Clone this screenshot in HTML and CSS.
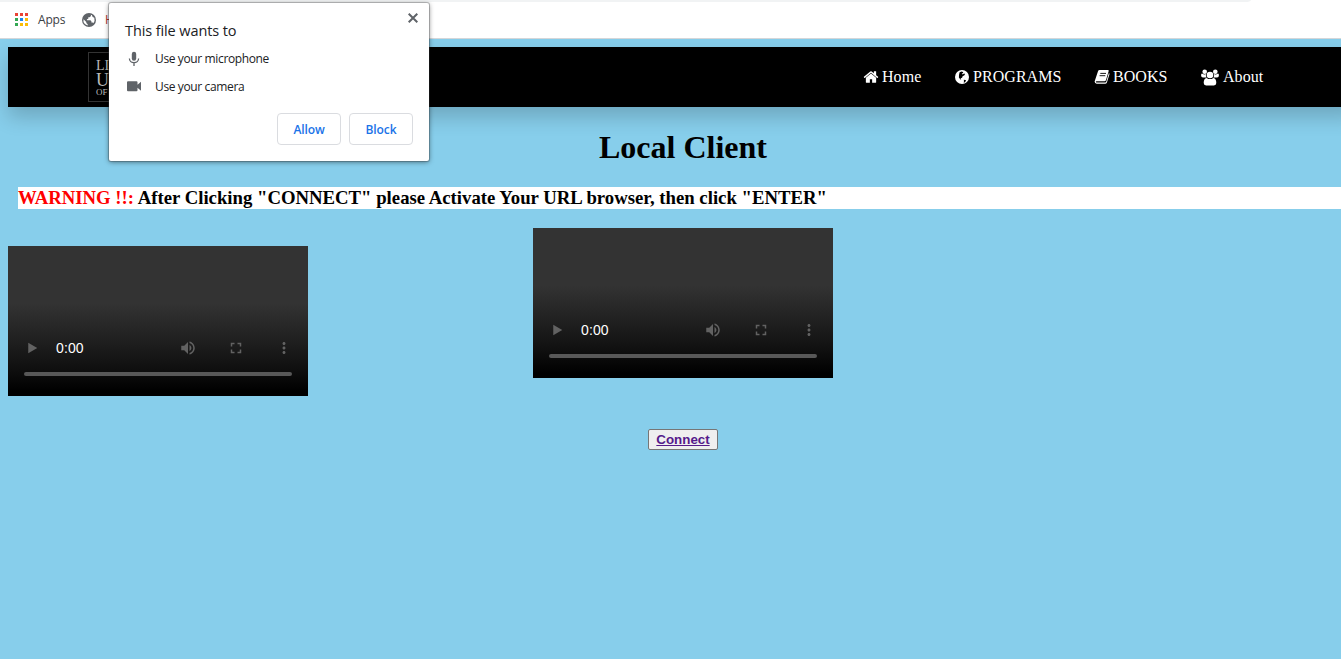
FILE: index.html
```html
<!DOCTYPE html>
<html lang="en">
<head>
<meta charset="utf-8">
<title>Local Client</title>
<link rel="stylesheet" href="styles.css">
</head>
<body>
<svg class="defs" width="0" height="0">
  <symbol id="globe" viewBox="0 0 14 14">
    <circle cx="7" cy="7" r="7" fill="currentColor"/>
    <path class="land" d="M4.600 2.200 6.500 1.400 8 2l.2 1-1.500.4.9 1 1.500-.8.900.3-.6 1.400-1.800 1-.5 1.400-1.500.5.6 1.500-1-.5-1.300-1.700L4 5z"/>
    <path class="land" d="M8.800 9.800l1.600.1.700.8-1.500 1.700-1 .1.400-1.200z"/>
  </symbol>
  <symbol id="play" viewBox="0 0 24 24"><path d="M7 5v14l12-7z"/></symbol>
  <symbol id="volume" viewBox="0 0 24 24"><path d="M3 9v6h4l5 5V4L7 9H3zm13.500 3c0-1.770-1.020-3.290-2.500-4.030v8.050c1.480-.73 2.500-2.250 2.500-4.020zM14 3.230v2.060c2.890.86 5 3.540 5 6.710s-2.110 5.850-5 6.710v2.060c4.010-.91 7-4.490 7-8.770s-2.990-7.860-7-8.770z"/></symbol>
  <symbol id="full" viewBox="0 0 24 24"><path d="M7 14H5v5h5v-2H7v-3zm-2-4h2V7h3V5H5v5zm12 7h-3v2h5v-5h-2v3zM14 5v2h3v3h2V5h-5z"/></symbol>
  <symbol id="more" viewBox="0 0 24 24"><path d="M12 8c1.100 0 2-.9 2-2s-.9-2-2-2-2 .9-2 2 .9 2 2 2zm0 2c-1.100 0-2 .9-2 2s.9 2 2 2 2-.9 2-2-.9-2-2-2zm0 6c-1.100 0-2 .9-2 2s.9 2 2 2 2-.9 2-2-.9-2-2-2z"/></symbol>
</svg>

<div class="browser-bar">
  <div class="address-edge"></div>
  <div class="bookmarks">
    <svg class="apps-icon" width="13" height="13" viewBox="0 0 13 13" shape-rendering="crispEdges">
      <path fill="#ea4335" d="M0 0h3v3H0zM5 0h3v3H5zM10 0h3v3h-3z"/>
      <path fill="#34a853" d="M0 5h3v3H0zM0 10h3v3H0z"/>
      <path fill="#1a86f0" d="M5 5h3v3H5z"/>
      <path fill="#fbbc05" d="M10 5h3v3h-3zM5 10h3v3H5zM10 10h3v3h-3z"/>
    </svg>
    <span class="apps-label">Apps</span>
    <svg class="site-icon" width="14" height="14" viewBox="0 0 14 14">
      <circle cx="7" cy="7" r="7" fill="#5f6368"/>
      <path fill="#fff" d="M7.200 1.400 8.800 1.700 9 3 7.600 4.200H6.300v1.500l-1.400.5v1h3.500l1 1v1.300h1.300l.6.7a5.600 5.600 0 0 0 1-5.400L10.700 4.100 9.800 2.100zM1.500 6.300 4.300 9v1.100l1.400 1.200v1.200A5.600 5.600 0 0 1 1.500 6.300z"/>
    </svg>
    <span class="site-label">H</span>
  </div>
</div>

<main class="page">
  <header class="header">
    <div class="logo"><span class="l1">LI</span><span class="l2">U</span><span class="l3">OF C</span></div>
    <nav class="nav">
      <a class="home"><svg width="16" height="16" viewBox="0 0 1792 1792"><path fill="currentColor" d="M1472 992v480q0 26-19 45t-45 19h-384v-384h-256v384h-384q-26 0-45-19t-19-45v-480q0-1 .5-3t.5-3l575-474 575 474q1 2 1 6zm223-69l-62 74q-8 9-21 11h-3q-13 0-21-7l-692-577-692 577q-12 8-24 7-13-2-21-11l-62-74q-8-10-7-23.500t11-21.500l719-599q32-26 76-26t76 26l244 204v-195q0-14 9-23t23-9h192q14 0 23 9t9 23v408l219 182q10 8 11 21.500t-7 23.500z"/></svg><span>Home</span></a>
      <a class="programs"><svg width="14" height="14"><use href="#globe"/></svg><span>PROGRAMS</span></a>
      <a class="books"><svg width="16" height="16" viewBox="0 0 16 16"><path fill="currentColor" d="M5.500 1h8.400q1.100 0 .8 1.100l-2.700 9q-.4 1.200-1.600 1.200H2.600q-1 0-.7.7.2.500 1 .500h8.300q.7 0 1-.7L14.900 4q.8.400.5 1.500l-2.500 8q-.4 1.300-1.800 1.300H2.700Q.7 14.500.6 12.500L4 2.200Q4.400 1 5.500 1z"/><path fill="none" stroke="#000" stroke-width=".9" d="M6.300 4.400h5.700M5.600 6.700h5.700"/></svg><span>BOOKS</span></a>
      <a class="about"><svg width="18" height="17" viewBox="0 0 18 17"><g fill="currentColor"><circle cx="3.700" cy="2.700" r="2.300"/><circle cx="14.300" cy="2.700" r="2.300"/><path d="M.1 6.500Q0 4.500 1 4.500q2.500 1.500 4 .5-.5 2 .6 3.500H2Q.1 8.500.1 6.500zM17.900 6.500q.1-2-.9-2-2.500 1.500-4 .5.500 2-.6 3.500H16q1.900 0 1.900-2z"/><circle cx="9" cy="6" r="3.300"/><path d="M5.600 8.900Q2.700 9.200 2.700 14q0 2.400 2.400 2.400h7.800q2.400 0 2.400-2.400 0-4.800-2.900-5.100Q9 11.300 5.600 8.900z"/></g></svg><span>About</span></a>
    </nav>
  </header>

  <h1 class="title">Local Client</h1>
  <p class="warning"><span class="alert">WARNING !!:</span> After Clicking "CONNECT" please Activate Your URL browser, then click "ENTER"</p>

  <div class="videos">
    <div class="video first">
      <div class="controls">
        <svg class="play"><use href="#play"/></svg><span class="time">0:00</span>
        <svg><use href="#volume"/></svg><svg><use href="#full"/></svg><svg><use href="#more"/></svg>
      </div>
      <div class="track"></div>
    </div>
    <div class="video">
      <div class="controls">
        <svg class="play"><use href="#play"/></svg><span class="time">0:00</span>
        <svg><use href="#volume"/></svg><svg><use href="#full"/></svg><svg><use href="#more"/></svg>
      </div>
      <div class="track"></div>
    </div>
  </div>
  <div class="connect-row"><button class="connect">Connect</button></div>
</main>

<div class="popup">
  <svg class="close" width="10" height="10" viewBox="0 0 10 10"><path d="M.7.7l8.600 8.600M9.300.7.7 9.300" stroke="#5f6368" stroke-width="2"/></svg>
  <div class="popup-title">This file wants to</div>
  <div class="perm">
    <svg width="16" height="16" viewBox="0 0 16 16"><path fill="#5f6368" d="M8 .8a2.200 2.200 0 0 1 2.200 2.200v4.500a2.200 2.200 0 0 1-4.400 0V3A2.200 2.200 0 0 1 8 .8z"/><path fill="none" stroke="#5f6368" stroke-width="1.300" d="M3.400 7.500a4.600 4.200 0 0 0 9.200 0M8 11.500V15"/></svg>
    <span>Use your microphone</span>
  </div>
  <div class="perm">
    <svg width="16" height="16" viewBox="0 0 16 16"><path fill="#5f6368" d="M2 2.200h8.500q1 0 1 1v2.600l3.500-3v9l-3.500-3v2.400q0 1-1 1H2q-1 0-1-1v-8q0-1 1-1z"/></svg>
    <span>Use your camera</span>
  </div>
  <div class="actions"><button class="choice">Allow</button><button class="choice">Block</button></div>
</div>
</body>
</html>
```
FILE: styles.css
```css
* { box-sizing: border-box; }
body {
  margin: 0;
  width: 1341px;
  height: 659px;
  overflow: hidden;
  background: #87ceeb;
  font-family: "Liberation Serif", "Times New Roman", serif;
}
.defs { position: absolute; }
.land { fill: #000; }

.browser-bar {
  height: 39px;
  background: #fff;
  border-bottom: 1px solid #d5d7da;
}
.address-edge {
  width: 1251px;
  height: 2px;
  background: #f1f3f4;
  border-bottom-right-radius: 6px 2px;
}
.bookmarks {
  display: flex;
  align-items: center;
  height: 35px;
  padding-left: 15px;
  font: 12px "Open Sans", sans-serif;
  color: #3c4043;
}
.apps-label { width: 27px; margin: 0 17px 0 10px; letter-spacing: -.2px; }
.site-label { margin-left: 9px; color: #a33; }

.page { width: 1358px; height: 620px; padding: 8px 0 0 8px; }
.header {
  display: flex;
  height: 60px;
  padding-left: 80px;
  background: #000;
  color: #fff;
  box-shadow: 0 10px 20px rgba(0, 0, 0, .19);
}
.logo {
  display: flex;
  flex-direction: column;
  gap: 1px;
  width: 60px;
  height: 50px;
  margin-top: 5px;
  padding: 6px 0 0 7px;
  border: 1px solid #333;
  color: #bbb;
}
.l1 { font-size: 14px; line-height: 13px; }
.l2 { font-size: 18px; line-height: 14px; }
.l3 { font-size: 9px; line-height: 9px; }
.nav { display: flex; height: 60px; margin-left: 715px; font-size: 16px; }
.nav a { display: flex; align-items: center; }
.nav svg { flex: none; }
.nav span { line-height: 18px; letter-spacing: .05px; }
.home { width: 92px; gap: 3px; }
.programs { width: 139px; gap: 4px; }
.books { width: 107px; gap: 3px; }
.about { gap: 4px; }

.title { margin: 21px 0 0; font-size: 32px; line-height: 38px; text-align: center; }
.warning {
  height: 22px;
  margin: 21px 0 0 10px;
  background: #fff;
  font-size: 18.740px;
  font-weight: bold;
  line-height: 22px;
}
.alert { color: #f00; }

.videos { display: flex; gap: 225px; margin-top: 19px; }
.video {
  display: flex;
  flex-direction: column;
  justify-content: flex-end;
  width: 300px;
  height: 150px;
  padding: 0 0 20px;
  background: linear-gradient(#333 0, #333 38%, #222 60%, #111 80%, #000 97%);
}
.first { margin-top: 18px; }
.controls {
  display: flex;
  align-items: center;
  gap: 30px;
  height: 32px;
  padding: 0 15px 0 16px;
  fill: #626262;
}
.controls svg { flex: none; width: 18px; height: 18px; }
.controls .play { margin: 0 -15px 0 -1px; }
.time { flex: 1; color: #fff; font: 14px "Liberation Sans", Arial, sans-serif; letter-spacing: .1px; }
.track { height: 4px; margin: 8px 16px 0; border-radius: 2px; background: #585858; }

.connect-row { display: flex; justify-content: center; margin: 33px 0 0; }
.connect {
  width: 70px;
  height: 21px;
  padding: 0;
  border: 1px solid #767676;
  border-radius: 2px;
  background: #efefef;
  color: #551a8b;
  font: bold 13.333px "Liberation Sans", Arial, sans-serif;
  text-decoration: underline;
}

.popup {
  position: absolute;
  left: 109px;
  top: 3px;
  width: 320px;
  height: 158px;
  padding: 18px 16px 16px;
  border-radius: 2px;
  background: #fff;
  box-shadow: 0 0 0 1px rgba(60, 64, 67, .3), 0 1px 5px rgba(0, 0, 0, .5);
  color: #202124;
  font-family: "Open Sans", sans-serif;
}
.close { position: absolute; top: 10px; right: 11px; }
.popup-title { height: 24px; font-size: 14.500px; line-height: 20px; letter-spacing: -.1px; }
.perm { display: flex; align-items: center; gap: 13px; height: 28px; padding-left: 1px; font-size: 12px; letter-spacing: -.37px; }
.perm span { padding-bottom: 1px; }
.actions { display: flex; justify-content: flex-end; gap: 8px; margin-top: 12px; }
.choice {
  width: 64px;
  height: 32px;
  padding: 0;
  border: 1px solid #dadce0;
  border-radius: 4px;
  background: #fff;
  color: #1a73e8;
  font: 600 12px "Open Sans", sans-serif;
  letter-spacing: -.1px;
}
```
